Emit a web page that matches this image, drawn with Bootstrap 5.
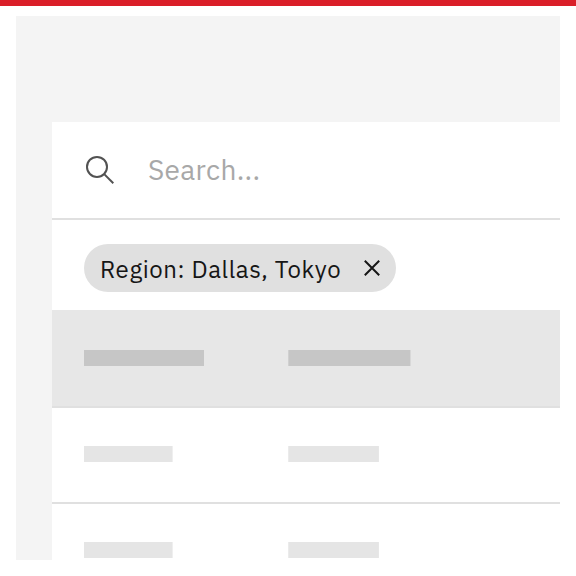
<!DOCTYPE html>
<html lang="en">
<head>
<meta charset="utf-8">
<meta name="viewport" content="width=device-width, initial-scale=1">
<title>Filtered table</title>
<link href="https://cdn.jsdelivr.net/npm/bootstrap@5.3.0/dist/css/bootstrap.min.css" rel="stylesheet">
<style>
  body { font-family: "IBM Plex Sans", Roboto, "Liberation Sans", sans-serif; color: #161616; }
  .status-strip { height: 6px; background: #da1e28; }
  .stage { height: 544px; margin: 10px 16px 0; padding: 106px 0 0 36px; background: #f4f4f4; }
  .search-bar { height: 98px; padding-left: 32px; border-bottom: 2px solid #e0e0e0; }
  .search-bar svg { margin-right: 32px; }
  .search-field { width: 300px; height: 40px; font-size: 28px; line-height: 40px; letter-spacing: .32px; color: #161616; }
  .search-field::placeholder { color: #a8a8a8; opacity: 1; }
  .search-field:focus { outline: 0; }
  .filter-bar { height: 90px; padding: 24px 32px 0; }
  .filter-tag { width: 312px; height: 48px; padding: 0 12px 0 16px; background: #e0e0e0; }
  .filter-label { font-size: 24px; line-height: 32px; letter-spacing: .61px; padding-top: 1px; }
  .grid-row { height: 96px; padding: 38px 0 0 32px; border-bottom: 2px solid #e0e0e0; }
  .grid-head { height: 98px; padding-top: 40px; background: #e7e7e7; }
  .grid-last { height: 56px; border-bottom: 0; }
  .cell { width: 204px; }
  .bone { width: 89px; height: 16px; background: #e5e5e5; border-right: 1px solid #efefef; }
  .cell + .cell .bone { width: 91px; border-left: 1px solid #ebebeb; border-right-color: #e7e7e7; }
  .grid-head .bone { width: 120px; background: #c6c6c6; border-right: 0; }
  .grid-head .cell + .cell .bone { width: 123px; border-left-color: #d0d0d0; border-right: 1px solid #d8d8d8; }
</style>
<script src="https://cdn.jsdelivr.net/npm/bootstrap@5.3.0/dist/js/bootstrap.bundle.min.js"></script>
</head>
<body class="bg-white overflow-hidden">
<div class="status-strip"></div>
<main class="stage">
  <div class="bg-white h-100 overflow-hidden">
    <div class="search-bar d-flex align-items-center">
      <svg class="flex-shrink-0" width="32" height="32" viewBox="0 0 32 32" fill="none" stroke="#525252" stroke-width="2" aria-hidden="true">
        <circle cx="13" cy="12.9" r="10"/><path d="M20.2 20.1 29.3 29.2"/>
      </svg>
      <input class="search-field border-0 p-0 bg-transparent" type="text" placeholder="Search..." aria-label="Search">
    </div>
    <div class="filter-bar">
      <div class="filter-tag rounded-pill d-flex align-items-center justify-content-between">
        <span class="filter-label text-nowrap">Region: Dallas, Tokyo</span>
        <button class="btn p-0 border-0 d-flex" type="button" aria-label="Clear filter">
          <svg width="24" height="24" viewBox="0 0 24 24" fill="none" stroke="#161616" stroke-width="2"><path d="M4.8 4.8 19.2 19.2M19.2 4.8 4.8 19.2"/></svg>
        </button>
      </div>
    </div>
    <div class="grid-row grid-head d-flex"><div class="cell"><div class="bone"></div></div><div class="cell"><div class="bone"></div></div></div>
    <div class="grid-row d-flex"><div class="cell"><div class="bone"></div></div><div class="cell"><div class="bone"></div></div></div>
    <div class="grid-row grid-last d-flex"><div class="cell"><div class="bone"></div></div><div class="cell"><div class="bone"></div></div></div>
  </div>
</main>
</body>
</html>
